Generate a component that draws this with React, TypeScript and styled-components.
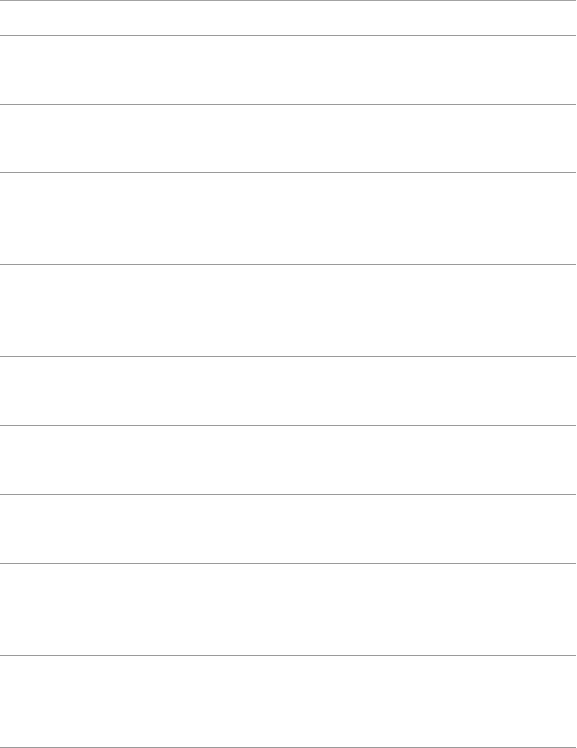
import React from 'react';
import styled, { createGlobalStyle } from 'styled-components';

const GlobalStyle = createGlobalStyle`
  html, body {
    margin: 0;
    padding: 0;
    background: #ffffff;
    font-family: 'Liberation Sans', Arial, sans-serif;
  }
`;

// 행 높이 (선 사이 간격)
const rows = [34, 68, 67, 91, 91, 68, 68, 68, 91, 91];

const Page = styled.div`
  width: 576px;
  display: flex;
  flex-direction: column;
  border-top: 1px solid #a3a3a3;
`;

const Row = styled.div<{ $height: number }>`
  height: ${({ $height }) => $height}px;
  border-bottom: 1px solid #9a9a9a;
  display: flex;
  align-items: center;
  color: #ffffff;
  font-size: 14px;
`;

const App = () => {
  return (
    <>
      <GlobalStyle />
      <Page>
        {rows.map((h, i) => (
          <Row key={i} $height={h} />
        ))}
      </Page>
    </>
  );
};

export default App;
